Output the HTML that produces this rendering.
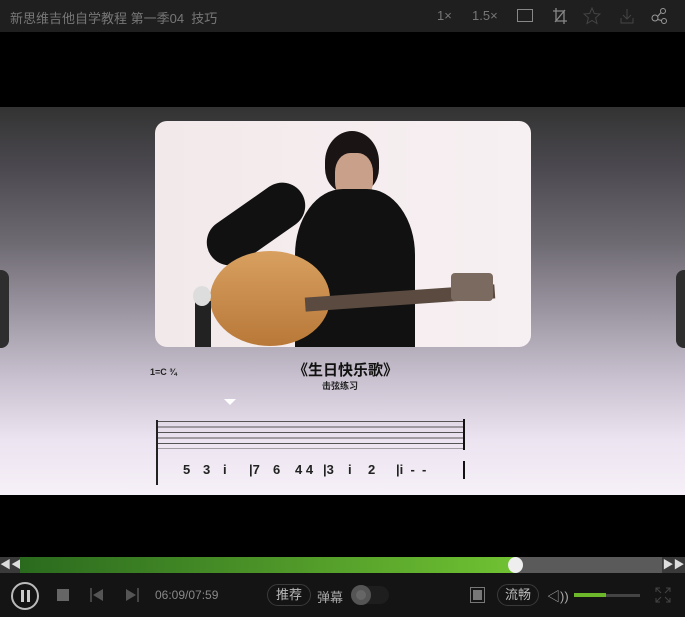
<!DOCTYPE html>
<html><head><meta charset="utf-8"><style>
*{margin:0;padding:0;box-sizing:border-box}
body{width:685px;height:617px;background:#000;position:relative;overflow:hidden;font-family:"Liberation Sans","Noto Sans CJK SC",sans-serif}
.a{position:absolute}
.top{left:0;top:0;width:685px;height:32px;background:#1f1f1f;color:#777;font-size:13px}
.vid{left:0;top:107px;width:685px;height:388px;background:linear-gradient(#333 0%,#4a484e 15%,#6e6a72 35%,#9a94a0 52%,#c9c1cf 70%,#ece4f0 86%,#f6f0f8 100%)}
.ctrl{left:0;top:573px;width:685px;height:44px;background:#141414}
.pill{border:1px solid #3a3a3a;border-radius:12px;color:#bbb;font-size:13px;height:22px;line-height:20px;text-align:center}
.n{font-size:13px;color:#222;font-weight:bold}
</style></head><body>
<div class="a top">
 <div class="a" style="left:10px;top:8px">新思维吉他自学教程 第一季04&nbsp; 技巧</div>
 <div class="a" style="left:437px;top:8px">1×</div>
 <div class="a" style="left:472px;top:8px">1.5×</div>
 <div class="a" style="left:517px;top:9px;width:16px;height:13px;border:1px solid #888"></div>
 <svg class="a" style="left:552px;top:7px" width="16" height="18"><path d="M4 1V14H15M1 4H12V17M3 15L13 3" stroke="#888" fill="none" stroke-width="1.3"/></svg>
 <svg class="a" style="left:583px;top:7px" width="18" height="18"><path d="M9 1L11.3 6.5 17 7 12.6 10.8 14 16.5 9 13.5 4 16.5 5.4 10.8 1 7 6.7 6.5Z" stroke="#444" fill="none"/></svg>
 <svg class="a" style="left:619px;top:8px" width="16" height="16"><path d="M8 1V11M4 7L8 11 12 7M2 10V15H14V10" stroke="#444" fill="none"/></svg>
 <svg class="a" style="left:651px;top:7px" width="17" height="18"><circle cx="4" cy="11" r="3" stroke="#999" fill="none"/><circle cx="12" cy="4" r="2.5" stroke="#999" fill="none"/><circle cx="13" cy="14" r="2.5" stroke="#999" fill="none"/><path d="M6.5 9.5L10 5.5M6.5 12.5L10.5 13.5" stroke="#999"/></svg>
</div>
<div class="a vid">
 <div class="a" style="left:155px;top:14px;width:376px;height:226px;border-radius:12px;background:linear-gradient(90deg,#f2e9ea,#f7f0f2);overflow:hidden">
  <div class="a" style="left:170px;top:10px;width:54px;height:62px;border-radius:50% 50% 40% 40%;background:#1a1414"></div>
  <div class="a" style="left:180px;top:32px;width:38px;height:48px;border-radius:40%;background:#c9a08a"></div>
  <div class="a" style="left:140px;top:68px;width:120px;height:165px;border-radius:40% 40% 0 0;background:#111"></div>
  <div class="a" style="left:46px;top:80px;width:110px;height:46px;border-radius:30px;background:#111;transform:rotate(-35deg)"></div>
  <div class="a" style="left:55px;top:130px;width:120px;height:95px;border-radius:50%;background:linear-gradient(#d8a060,#b87838)"></div>
  <div class="a" style="left:150px;top:170px;width:190px;height:14px;background:#5a4a40;transform:rotate(-4deg)"></div>
  <div class="a" style="left:296px;top:152px;width:42px;height:28px;background:#7a6a60;border-radius:4px"></div>
  <div class="a" style="left:40px;top:180px;width:16px;height:46px;background:#222"></div>
  <div class="a" style="left:38px;top:165px;width:18px;height:20px;border-radius:50%;background:#ddd"></div>
 </div>
 <div class="a" style="left:0;top:163px;width:9px;height:78px;border-radius:0 8px 8px 0;background:#2e2e2e"></div>
 <div class="a" style="left:676px;top:163px;width:9px;height:78px;border-radius:8px 0 0 8px;background:#2e2e2e"></div>
 <div class="a" style="left:150px;top:260px;font-size:9px;color:#222;font-weight:bold">1=C ¾</div>
 <div class="a" style="left:293px;top:252px;font-size:15px;color:#111;font-weight:bold">《生日快乐歌》</div>
 <div class="a" style="left:322px;top:272px;font-size:9px;color:#222;font-weight:bold">击弦练习</div>
 <div class="a" style="left:224px;top:292px;width:0;height:0;border-left:6px solid transparent;border-right:6px solid transparent;border-top:6px solid #fff"></div>
 <div class="a" style="left:156px;top:313px;width:2px;height:65px;background:#222"></div>
 <div class="a" style="left:158px;top:314px;width:307px;height:28px;background:repeating-linear-gradient(#555 0 1px,transparent 1px 5.5px)"></div>
 <div class="a" style="left:463px;top:312px;width:2px;height:31px;background:#111"></div>
 <div class="a" style="left:183px;top:355px;width:270px;height:24px;">
  <span class="a n" style="left:0">5</span><span class="a n" style="left:20px">3</span><span class="a n" style="left:40px">i</span><span class="a n" style="left:66px">|7</span><span class="a n" style="left:90px">6</span><span class="a n" style="left:112px">4 4</span><span class="a n" style="left:140px">|3</span><span class="a n" style="left:165px">i</span><span class="a n" style="left:185px">2</span><span class="a n" style="left:213px">|i&nbsp; -&nbsp; -</span>
 </div>
 <div class="a" style="left:463px;top:354px;width:2px;height:18px;background:#111"></div>
</div>
<div class="a" style="left:0;top:557px;width:20px;height:16px;background:#3a3a3a;color:#ddd;font-size:11px;line-height:16px;text-align:center">◀◀</div>
<div class="a" style="left:20px;top:557px;width:495px;height:16px;background:linear-gradient(90deg,#2a6a1e,#4c9428 50%,#70c232)"></div>
<div class="a" style="left:515px;top:557px;width:147px;height:16px;background:#5a5a5a"></div>
<div class="a" style="left:508px;top:557px;width:15px;height:16px;border-radius:50%;background:#eee"></div>
<div class="a" style="left:662px;top:557px;width:23px;height:16px;background:#3a3a3a;color:#ddd;font-size:11px;line-height:16px;text-align:center">▶▶</div>
<div class="a ctrl">
 <div class="a" style="left:11px;top:9px;width:28px;height:28px;border:2px solid #bbb;border-radius:50%"></div>
 <div class="a" style="left:21px;top:17px;width:3px;height:12px;background:#ccc"></div>
 <div class="a" style="left:27px;top:17px;width:3px;height:12px;background:#ccc"></div>
 <div class="a" style="left:57px;top:16px;width:12px;height:12px;background:#666"></div>
 <svg class="a" style="left:90px;top:15px" width="14" height="14"><path d="M1 0V14" stroke="#555" stroke-width="1.5"/><path d="M13 1V13L3 7Z" fill="#555"/></svg>
 <svg class="a" style="left:125px;top:15px" width="14" height="14"><path d="M13 0V14" stroke="#555" stroke-width="1.5"/><path d="M1 1V13L11 7Z" fill="#555"/></svg>
 <div class="a" style="left:155px;top:15px;color:#888;font-size:12px">06:09/07:59</div>
 <div class="a pill" style="left:267px;top:11px;width:44px">推荐</div>
 <div class="a" style="left:317px;top:14px;color:#aaa;font-size:13px">弹幕</div>
 <div class="a" style="left:351px;top:13px;width:38px;height:18px;border-radius:9px;background:#1e1e1e"></div>
 <div class="a" style="left:351px;top:12px;width:20px;height:20px;border-radius:50%;background:#666;border:5px solid #555"></div>
 <div class="a" style="left:470px;top:14px;width:15px;height:16px;border:1px solid #777;padding:2px"><div style="width:100%;height:100%;background:#777"></div></div>
 <div class="a pill" style="left:497px;top:11px;width:42px">流畅</div>
 <div class="a" style="left:547px;top:13px;color:#aaa;font-size:13px">◁))</div>
 <div class="a" style="left:574px;top:21px;width:66px;height:3px;background:#444"></div>
 <div class="a" style="left:574px;top:20px;width:32px;height:4px;background:#6cb82a"></div>
 <svg class="a" style="left:655px;top:14px" width="16" height="16"><path d="M1 5V1H5M11 1H15V5M15 11V15H11M5 15H1V11M1 1L6 6M15 1L10 6M15 15L10 10M1 15L6 10" stroke="#444" fill="none"/></svg>
</div>
</body></html>
